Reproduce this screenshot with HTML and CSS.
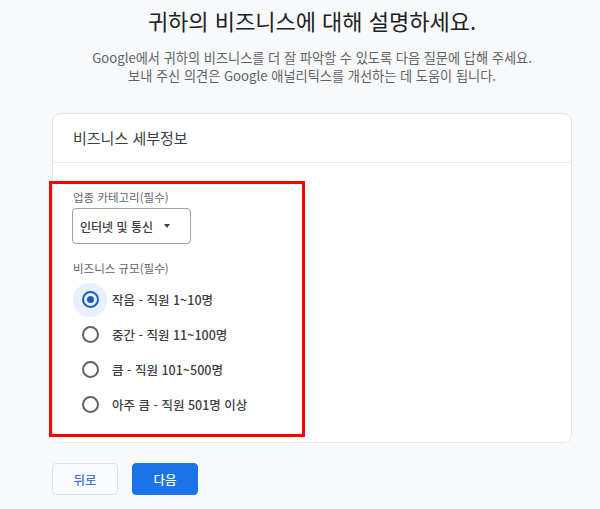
FILE: index.html
```html
<!DOCTYPE html>
<html lang="ko">
<head>
<meta charset="utf-8">
<title>비즈니스 정보</title>
<link rel="stylesheet" href="styles.css">
</head>
<body>
<div class="page">
  <header class="intro">
    <h1 class="title">귀하의 비즈니스에 대해 설명하세요.</h1>
    <p class="subtitle">Google에서 귀하의 비즈니스를 더 잘 파악할 수 있도록 다음 질문에 답해 주세요.<br>보내 주신 의견은 Google 애널리틱스를 개선하는 데 도움이 됩니다.</p>
  </header>

  <section class="card">
    <div class="card-header">비즈니스 세부정보</div>
    <div class="card-body">
      <div class="field-label">업종 카테고리(필수)</div>
      <div class="select">
        <span class="select-text">인터넷 및 통신</span>
        <span class="caret"></span>
      </div>

      <div class="field-label second">비즈니스 규모(필수)</div>
      <div class="radio-group">
        <div class="radio-row">
          <span class="radio-hit selected"><span class="radio checked"><span class="dot"></span></span></span>
          <span class="radio-label">작음 - 직원 1~10명</span>
        </div>
        <div class="radio-row">
          <span class="radio-hit"><span class="radio"></span></span>
          <span class="radio-label">중간 - 직원 11~100명</span>
        </div>
        <div class="radio-row">
          <span class="radio-hit"><span class="radio"></span></span>
          <span class="radio-label">큼 - 직원 101~500명</span>
        </div>
        <div class="radio-row">
          <span class="radio-hit"><span class="radio"></span></span>
          <span class="radio-label">아주 큼 - 직원 501명 이상</span>
        </div>
      </div>
    </div>
    <div class="highlight"></div>
  </section>

  <div class="actions">
    <button class="btn btn-back">뒤로</button>
    <button class="btn btn-next">다음</button>
  </div>
</div>
</body>
</html>
```

FILE: styles.css
```css
html, body {
  margin: 0;
  padding: 0;
  background: #f8f9fa;
}

body {
  font-family: "Noto Sans CJK KR", "Noto Sans", "Liberation Sans", sans-serif;
  color: #202124;
}

.page {
  width: 520px;
  margin-left: 52px;
}

.intro {
  text-align: center;
  padding-top: 6px;
}

.title {
  margin: 0;
  font-size: 22px;
  font-weight: 400;
  line-height: 28px;
  color: #202124;
}

.subtitle {
  margin: 15px 0 0;
  font-size: 13.2px;
  line-height: 17.5px;
  color: #5f6368;
}

.card {
  position: relative;
  margin-top: 29px;
  background: #fff;
  border: 1px solid #e3e5e8;
  border-radius: 8px;
  box-sizing: border-box;
}

.card-header {
  height: 48px;
  line-height: 47px;
  padding-left: 20px;
  font-size: 15px;
  color: #3c4043;
  border-bottom: 1px solid #e8eaed;
}

.card-body {
  padding: 27px 20px 20px;
}

.field-label {
  font-size: 11.5px;
  line-height: 14px;
  color: #5f6368;
}

.field-label.second {
  margin-top: 17px;
}

.select {
  margin-top: 4px;
  width: 119px;
  height: 36px;
  box-sizing: border-box;
  border: 1px solid #9aa0a6;
  border-radius: 4px;
  display: flex;
  align-items: center;
  padding-left: 7px;
  margin-left: -1px;
}

.select-text {
  font-size: 12px;
  font-weight: 500;
  color: #3c4043;
}

.caret {
  margin-left: 11px;
  width: 0;
  height: 0;
  border-left: 3.5px solid transparent;
  border-right: 3.5px solid transparent;
  border-top: 4px solid #3c4043;
}

.radio-group {
  margin-top: 7px;
}

.radio-row {
  display: flex;
  align-items: center;
  height: 35px;
}

.radio-hit {
  width: 34px;
  height: 34px;
  border-radius: 50%;
  display: flex;
  align-items: center;
  justify-content: center;
}

.radio-hit.selected {
  background: #e8f0fe;
}

.radio {
  width: 17px;
  height: 17px;
  box-sizing: border-box;
  border: 2px solid #5f6368;
  border-radius: 50%;
  display: flex;
  align-items: center;
  justify-content: center;
}

.radio.checked {
  border-color: #1a5fc8;
}

.dot {
  width: 7px;
  height: 7px;
  border-radius: 50%;
  background: #1a5fc8;
}

.radio-label {
  margin-left: 5px;
  font-size: 12.5px;
  font-weight: 500;
  color: #3c4043;
}

.highlight {
  position: absolute;
  left: -4px;
  top: 67px;
  width: 256px;
  height: 256px;
  box-sizing: border-box;
  border: 3px solid #ff0000;
  pointer-events: none;
}

.actions {
  display: flex;
  gap: 14px;
  margin-top: 20px;
}

.btn {
  height: 32px;
  width: 66px;
  border-radius: 4px;
  font-family: inherit;
  font-size: 12.5px;
  font-weight: 500;
  padding: 0;
}

.btn-back {
  background: #fafbfc;
  border: 1px solid #dfe1e5;
  color: #3f72d8;
}

.btn-next {
  background: #1a73e8;
  border: 1px solid #1a73e8;
  color: #fff;
}
```
